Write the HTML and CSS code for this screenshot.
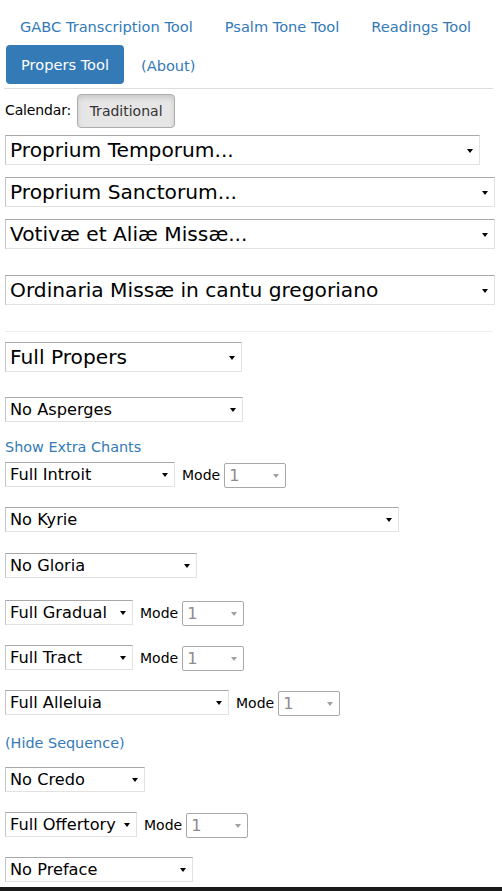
FILE: index.html
```html
<!DOCTYPE html>
<html>
<head>
<meta charset="utf-8">
<link rel="stylesheet" href="styles.css">
</head>
<body>
<div class="page">
  <ul class="nav">
    <li><a class="tab">GABC Transcription Tool</a></li>
    <li><a class="tab">Psalm Tone Tool</a></li>
    <li><a class="tab">Readings Tool</a></li>
    <li><a class="tab active">Propers Tool</a></li>
    <li><a class="tab">(About)</a></li>
  </ul>
  <div class="rule"></div>

  <div class="calendar-row">
    <span class="label">Calendar:</span>
    <span class="btn">Traditional</span>
  </div>

  <div class="sel big w-temporum"><span>Proprium Temporum...</span><i class="arrow"></i></div>
  <div class="sel big w-full gap12"><span>Proprium Sanctorum...</span><i class="arrow"></i></div>
  <div class="sel big w-full gap12"><span>Votivæ et Aliæ Missæ...</span><i class="arrow"></i></div>
  <div class="sel big w-full gap26"><span>Ordinaria Missæ in cantu gregoriano</span><i class="arrow"></i></div>

  <div class="rule light"></div>

  <div class="sel big w-propers gap10"><span>Full Propers</span><i class="arrow"></i></div>

  <div class="sel small w-asperges gap25"><span>No Asperges</span><i class="arrow"></i></div>

  <a class="link gap15">Show Extra Chants</a>

  <div class="row gap5">
    <div class="sel small w-introit"><span>Full Introit</span><i class="arrow"></i></div>
    <span class="mode">Mode</span>
    <div class="sel small mode-sel"><span>1</span><i class="arrow"></i></div>
  </div>

  <div class="sel small w-kyrie gap20"><span>No Kyrie</span><i class="arrow"></i></div>
  <div class="sel small w-gloria gap21"><span>No Gloria</span><i class="arrow"></i></div>

  <div class="row gap22">
    <div class="sel small w-gradual"><span>Full Gradual</span><i class="arrow"></i></div>
    <span class="mode">Mode</span>
    <div class="sel small mode-sel"><span>1</span><i class="arrow"></i></div>
  </div>

  <div class="row gap20">
    <div class="sel small w-gradual"><span>Full Tract</span><i class="arrow"></i></div>
    <span class="mode">Mode</span>
    <div class="sel small mode-sel"><span>1</span><i class="arrow"></i></div>
  </div>

  <div class="row gap20">
    <div class="sel small w-alleluia"><span>Full Alleluia</span><i class="arrow"></i></div>
    <span class="mode">Mode</span>
    <div class="sel small mode-sel"><span>1</span><i class="arrow"></i></div>
  </div>

  <a class="link gap18">(Hide Sequence)</a>

  <div class="sel small w-credo gap14"><span>No Credo</span><i class="arrow"></i></div>

  <div class="row gap20">
    <div class="sel small w-offertory"><span>Full Offertory</span><i class="arrow"></i></div>
    <span class="mode">Mode</span>
    <div class="sel small mode-sel"><span>1</span><i class="arrow"></i></div>
  </div>

  <div class="sel small w-preface gap20"><span>No Preface</span><i class="arrow"></i></div>
</div>
<div class="bottom-bar"></div>
</body>
</html>
```

FILE: styles.css
```css
html, body {
  margin: 0;
  padding: 0;
  background: #fff;
  overflow: hidden;
}
body {
  font-family: "DejaVu Sans", Verdana, sans-serif;
  color: #000;
  height: 891px;
  display: flex;
  flex-direction: column;
}
.page {
  padding: 6px 7px 0 5px;
  flex: 1;
  min-height: 0;
  overflow: hidden;
  display: flex;
  flex-direction: column;
  align-items: flex-start;
}
.nav {
  list-style: none;
  margin: 0;
  padding: 0;
  display: flex;
  flex-wrap: wrap;
  column-gap: 2px;
  width: 490px;
}
.tab {
  display: block;
  padding: 11px 15px 9px;
  font-size: 14.6px;
  line-height: 19px;
  color: #337ab7;
  border-radius: 4px;
}
.tab.active {
  background: #337ab7;
  color: #fff;
  margin-left: 1px;
  padding: 10px 15px;
}
.rule {
  align-self: stretch;
  height: 1px;
  background: #ddd;
  margin: 4px 2px 0 -1px;
}
.rule.light {
  background: #eee;
  margin: 26px 2px 0 0;
}
.calendar-row {
  display: flex;
  align-items: center;
  margin-top: 5px;
}
.label {
  font-size: 14px;
  margin-top: -2px;
  letter-spacing: -0.15px;
}
.btn {
  margin-left: 6px;
  box-sizing: border-box;
  height: 34px;
  width: 98px;
  display: flex;
  align-items: center;
  justify-content: center;
  font-size: 14px;
  color: #333;
  background: #e6e6e6;
  border: 1px solid #adadad;
  border-radius: 4px;
  box-shadow: inset 0 3px 5px rgba(0, 0, 0, 0.125);
}
.sel {
  box-sizing: border-box;
  display: flex;
  align-items: center;
  justify-content: space-between;
  background: #fff;
  border: 1px solid;
  border-color: #a8a8a8 #e2e2e2 #e2e2e2 #c4c4c4;
  padding: 0 6px 0 4px;
  white-space: nowrap;
}
.sel.big {
  height: 30px;
  font-size: 20.2px;
  margin-top: 7px;
}
.sel.small {
  height: 25px;
  font-size: 16.2px;
}
.arrow {
  display: block;
  width: 0;
  height: 0;
  border-left: 3.5px solid transparent;
  border-right: 3.5px solid transparent;
  border-top: 4px solid #000;
  margin-top: 1px;
}
.w-temporum { width: 475px; }
.w-full { width: 490px; }
.w-propers { width: 237px; }
.w-asperges { width: 238px; }
.w-introit { width: 170px; }
.w-kyrie { width: 394px; }
.w-gloria { width: 192px; }
.w-gradual { width: 128px; }
.w-alleluia { width: 224px; }
.w-credo { width: 140px; }
.w-offertory { width: 132px; }
.w-preface { width: 188px; }

.gap5 { margin-top: 5px; }
.gap10 { margin-top: 10px; }
.gap12 { margin-top: 12px; }
.gap14 { margin-top: 14px; }
.gap15 { margin-top: 15px; }
.gap18 { margin-top: 18px; }
.gap20 { margin-top: 20px; }
.gap21 { margin-top: 21px; }
.gap22 { margin-top: 22px; }
.gap25 { margin-top: 25px; }
.gap26 { margin-top: 26px; }
.sel.big.gap10 { margin-top: 10px; }
.sel.big.gap12 { margin-top: 12px; }
.sel.big.gap26 { margin-top: 26px; }

.link {
  display: block;
  font-size: 14.4px;
  line-height: 20px;
  color: #337ab7;
}
.row {
  display: flex;
  align-items: flex-start;
  height: 25px;
}
.mode {
  font-size: 14px;
  margin: 5px 4px 0 7px;
}
.mode-sel {
  width: 62px;
  border: 1px solid #a9a9a9;
  border-radius: 2px;
  color: #8d8d8d;
  margin-top: 1px;
}
.mode-sel .arrow {
  border-top-color: #a0a0a0;
}
.bottom-bar {
  height: 4px;
  background: #1a1a1a;
  flex: none;
}
```
